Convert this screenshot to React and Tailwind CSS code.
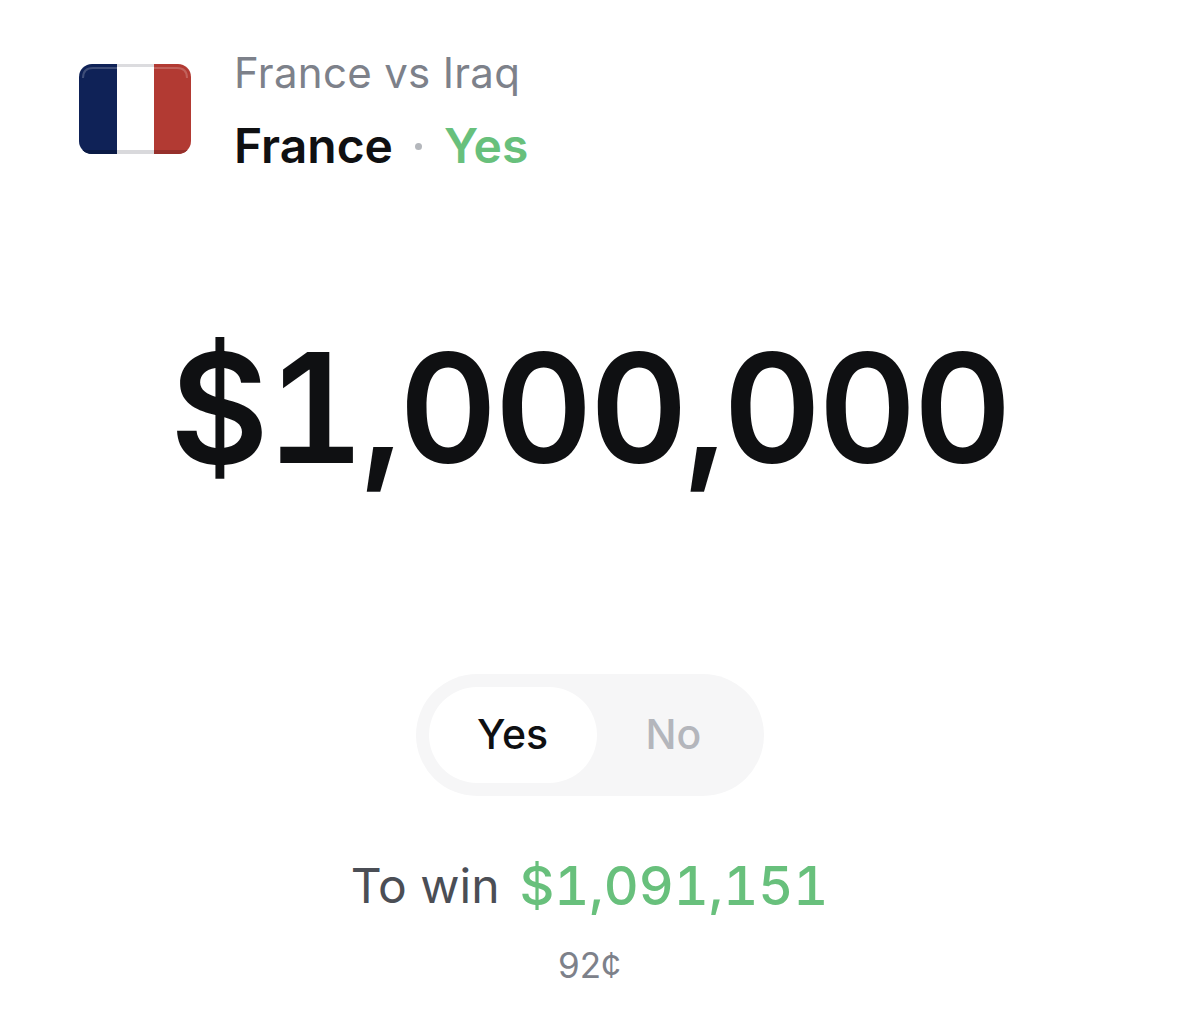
export default function App() {
  return (
    <div className="w-[1179px] h-[1034px] bg-white overflow-hidden font-['Inter',sans-serif]">
      {/* Header */}
      <div className="flex items-start gap-[44px] pl-[79px] pt-[49px]">
        <svg width="112" height="90" viewBox="0 0 112 90" className="shrink-0 mt-[15px]">
          <defs>
            <clipPath id="flagClip">
              <rect width="112" height="90" rx="13" />
            </clipPath>
          </defs>
          <g clipPath="url(#flagClip)">
            <rect width="38" height="90" fill="#0f2257" />
            <rect x="38" width="37" height="90" fill="#ffffff" />
            <rect x="75" width="37" height="90" fill="#b23a33" />
            <rect x="38" y="0" width="37" height="3" fill="#dcdcdf" />
            <rect x="38" y="86" width="37" height="4" fill="#d9d9dc" />
            <rect x="75" y="86" width="37" height="4" fill="#96302b" />
            <rect x="0" y="86" width="38" height="4" fill="#0a1a45" />
          </g>
          <path d="M4 14 Q4 4 14 4 H38 M75 4 H98 Q108 4 108 14" fill="none" stroke="#ffffff" strokeOpacity="0.2" strokeWidth="2" />
        </svg>
        <div className="flex flex-col -ml-px">
          <p className="text-[42px] leading-[48px] text-[#7d818a] tracking-[0.3px]">France vs Iraq</p>
          <p className="mt-[22px] flex items-center text-[48px] leading-[54px] font-semibold">
            <span className="text-[#0f1012]">France</span>
            <span className="ml-[22px] mr-[22px] w-[7px] h-[7px] rounded-full bg-[#b4b7bc]"></span>
            <span className="text-[#68c07c]">Yes</span>
          </p>
        </div>
      </div>

      {/* Amount */}
      <p className="mt-[145px] text-center text-[152px] leading-[180px] font-semibold tabular-nums text-[#0f1012] tracking-[-3px]">$1,000,000</p>

      {/* Yes / No toggle */}
      <div className="mt-[176px] flex justify-center">
        <div className="flex items-center w-[348px] h-[122px] p-[13px] rounded-full bg-[#f6f6f7]">
          <div className="flex items-center justify-center w-[168px] h-[96px] rounded-full bg-white text-[41px] font-medium text-[#0f1012]">Yes</div>
          <div className="flex items-center justify-center w-[154px] h-[96px] text-[41px] font-medium text-[#b4b6bc]">No</div>
        </div>
      </div>

      {/* Payout */}
      <div className="mt-[60px] flex justify-center items-center gap-[20px]">
        <span className="text-[48px] leading-[60px] text-[#4b4e55]">To win</span>
        <span className="text-[54px] leading-[60px] font-medium tabular-nums text-[#68c07c]">$1,091,151</span>
      </div>
      <p className="mt-[27px] text-center text-[35px] leading-[44px] text-[#7d818a]">92¢</p>
    </div>
  )
}
